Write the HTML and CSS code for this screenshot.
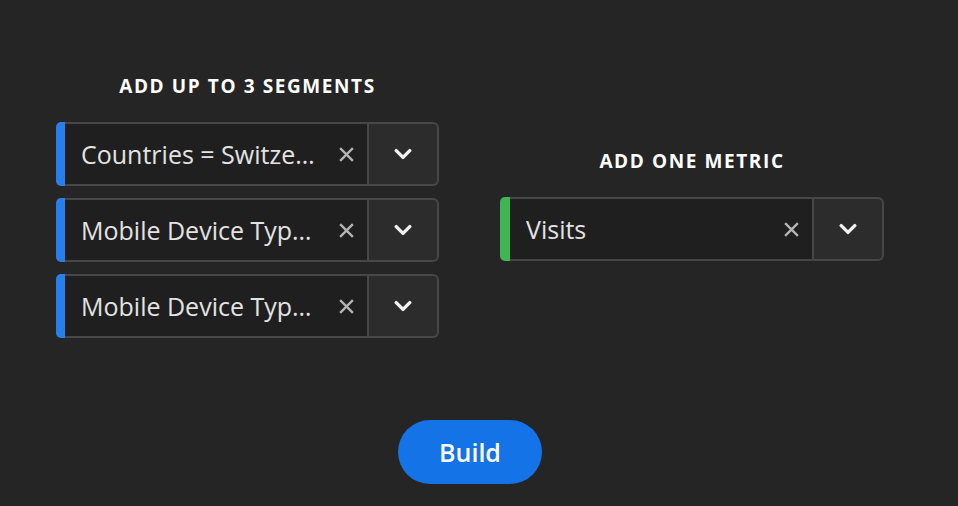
FILE: index.html
```html
<!DOCTYPE html>
<html>
<head>
<meta charset="utf-8">
<link rel="stylesheet" href="styles.css">
</head>
<body>
<div class="page">
  <div class="columns">
    <section class="col col-left">
      <h2 class="heading">ADD UP TO 3 SEGMENTS</h2>
      <div class="chips">
        <div class="chip chip-seg">
          <div class="bar"></div>
          <div class="field"><span class="label">Countries = Switze…</span>
            <svg class="x" viewBox="0 0 16 16"><path d="M2 2L14 14M14 2L2 14"/></svg></div>
          <div class="drop"><svg class="chev" viewBox="0 0 16 10"><path d="M2 2L8 8L14 2"/></svg></div>
        </div>
        <div class="chip chip-seg">
          <div class="bar"></div>
          <div class="field"><span class="label">Mobile Device Typ…</span>
            <svg class="x" viewBox="0 0 16 16"><path d="M2 2L14 14M14 2L2 14"/></svg></div>
          <div class="drop"><svg class="chev" viewBox="0 0 16 10"><path d="M2 2L8 8L14 2"/></svg></div>
        </div>
        <div class="chip chip-seg">
          <div class="bar"></div>
          <div class="field"><span class="label">Mobile Device Typ…</span>
            <svg class="x" viewBox="0 0 16 16"><path d="M2 2L14 14M14 2L2 14"/></svg></div>
          <div class="drop"><svg class="chev" viewBox="0 0 16 10"><path d="M2 2L8 8L14 2"/></svg></div>
        </div>
      </div>
    </section>
    <section class="col col-right">
      <h2 class="heading">ADD ONE METRIC</h2>
      <div class="chips">
        <div class="chip chip-metric">
          <div class="bar"></div>
          <div class="field"><span class="label">Visits</span>
            <svg class="x" viewBox="0 0 16 16"><path d="M2 2L14 14M14 2L2 14"/></svg></div>
          <div class="drop"><svg class="chev" viewBox="0 0 16 10"><path d="M2 2L8 8L14 2"/></svg></div>
        </div>
      </div>
    </section>
  </div>
  <div class="actions">
    <button class="build">Build</button>
  </div>
</div>
</body>
</html>
```
FILE: styles.css
```css
html, body {
  margin: 0;
  padding: 0;
  background: #252525;
  width: 958px;
  height: 506px;
  overflow: hidden;
  font-family: "Open Sans", "Noto Sans", sans-serif;
}
.page {
  padding-top: 73px;
  padding-left: 56px;
  width: 828px;
}
.columns {
  display: flex;
  gap: 61px;
}
.col {
  width: 383px;
  display: flex;
  flex-direction: column;
  align-items: stretch;
}
.col-right {
  padding-top: 75px;
  width: 384px;
}
.heading {
  margin: 0 0 22px 0;
  text-align: center;
  color: #ffffff;
  font-size: 19px;
  font-weight: 700;
  letter-spacing: 1.6px;
  line-height: 27px;
}
.chips {
  display: flex;
  flex-direction: column;
  gap: 12px;
}
.chip {
  display: flex;
  height: 64px;
  box-sizing: border-box;
}
.bar {
  width: 9px;
  border-radius: 5px 0 0 5px;
  flex: none;
}
.chip-seg .bar { background: #2680eb; }
.chip-metric .bar { background: #3fb553; width: 10px; }
.field {
  flex: 1;
  display: flex;
  align-items: center;
  background: #1f1f1f;
  border-top: 2px solid #474747;
  border-bottom: 2px solid #474747;
  border-right: 2px solid #474747;
  padding: 0 12px 0 16px;
  min-width: 0;
}
.label {
  flex: 1;
  color: #e3e3e3;
  font-size: 25px;
  white-space: nowrap;
  overflow: hidden;
}
.x {
  width: 17px;
  height: 17px;
  flex: none;
  fill: none;
  stroke: #b4b4b4;
  stroke-width: 2.2;
}
.drop {
  width: 68px;
  flex: none;
  display: flex;
  align-items: center;
  justify-content: center;
  background: #2c2c2c;
  border: 2px solid #474747;
  border-left: none;
  border-radius: 0 6px 6px 0;
}
.chev {
  width: 18px;
  height: 12px;
  fill: none;
  stroke: #f0f0f0;
  stroke-width: 3;
  stroke-linecap: round;
  stroke-linejoin: round;
}
.actions {
  display: flex;
  justify-content: center;
  padding-top: 82px;
}
.build {
  width: 144px;
  height: 64px;
  border: none;
  border-radius: 32px;
  background: #1473e6;
  color: #ffffff;
  font-family: "Open Sans", "Noto Sans", sans-serif;
  font-size: 25px;
  font-weight: 600;
  padding: 0;
}
```
